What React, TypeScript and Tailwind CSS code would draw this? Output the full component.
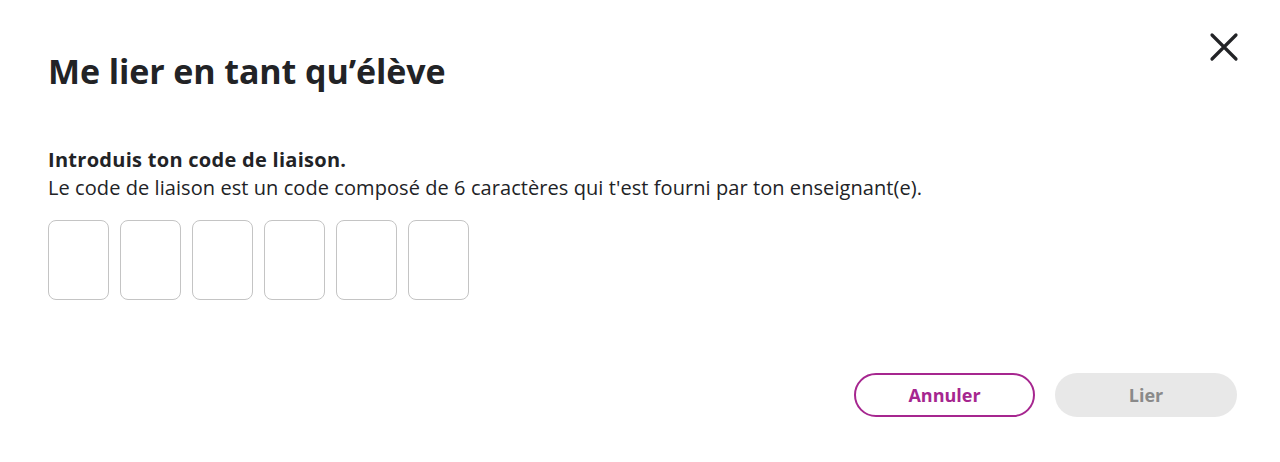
import React from "react";

export default function App() {
  return (
    <div className="w-[1280px] h-[462px] bg-white text-[#222326] relative" style={{ fontFamily: '"Open Sans", sans-serif' }}>
      <button className="absolute right-[40px] top-[31px] w-[32px] h-[32px] flex items-center justify-center" aria-label="Fermer">
        <svg width="30" height="30" viewBox="0 0 30 30" fill="none" stroke="#222326" strokeWidth="3.2" strokeLinecap="round">
          <path d="M3 3 L27 27 M27 3 L3 27" />
        </svg>
      </button>
      <div className="pl-[48px] pr-[43px] pt-[48px] flex flex-col">
        <h1 className="text-[34px] leading-[46px] font-bold tracking-[-0.1px]">Me lier en tant qu’élève</h1>
        <div className="mt-[52px]">
          <p className="text-[20px] leading-[28px] font-bold tracking-[0.28px]">Introduis ton code de liaison.</p>
          <p className="text-[20px] leading-[28px] tracking-[0.07px]">Le code de liaison est un code composé de 6 caractères qui t'est fourni par ton enseignant(e).</p>
        </div>
        <div className="mt-[18px] flex gap-[11px]">
          {[0, 1, 2, 3, 4, 5].map((i) => (
            <div key={i} className="w-[61px] h-[80px] border border-[#c4c4c4] rounded-[8px]" />
          ))}
        </div>
        <div className="mt-[73px] flex justify-end gap-[20px]">
          <button className="w-[181px] h-[44px] rounded-full border-2 border-[#a6268f] text-[#a6268f] text-[18px] font-bold">Annuler</button>
          <button className="w-[182px] h-[44px] rounded-full bg-[#e8e8e8] text-[#8a8a8a] text-[18px] font-bold">Lier</button>
        </div>
      </div>
    </div>
  );
}
